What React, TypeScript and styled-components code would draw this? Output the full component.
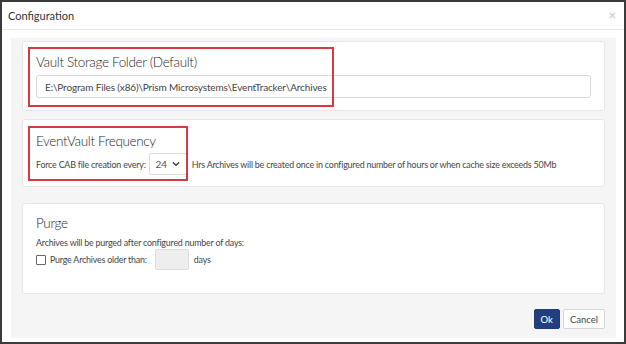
import React from "react";
import styled, { createGlobalStyle } from "styled-components";
import { FaChevronDown } from "react-icons/fa";

const GlobalStyle = createGlobalStyle`
  html, body {
    margin: 0;
    padding: 0;
    background: #ffffff;
  }
  body {
    font-family: Lato, "Open Sans", sans-serif;
    color: #333;
  }
`;

const Dialog = styled.div`
  box-sizing: border-box;
  width: 626px;
  height: 344px;
  border: 2px solid #3b3b3b;
  background: #fff;
  display: flex;
  flex-direction: column;
`;

const Header = styled.div`
  height: 27px;
  border-bottom: 1px solid #e8e8e8;
  display: flex;
  align-items: center;
  justify-content: space-between;
  padding: 0 8px 0 6px;
  font-size: 11px;
  color: #333;
`;

const Close = styled.span`
  color: #c4c4c4;
  font-size: 13px;
  line-height: 1;
  margin-top: -1px;
`;

const Body = styled.div`
  flex: 1;
  padding: 8px 8px 4px 9px;
  display: flex;
`;

const Well = styled.div`
  flex: 1;
  background: #f5f5f5;
  padding: 3px 11px 0 11px;
  display: flex;
  flex-direction: column;
`;

const Panel = styled.div<{ $pt: number; $pb: number; $mt?: number }>`
  position: relative;
  background: #fff;
  border: 1px solid #e6e6e6;
  border-radius: 3px;
  padding: ${(p) => p.$pt}px 13px ${(p) => p.$pb}px 13px;
  margin-top: ${(p) => p.$mt ?? 0}px;
`;

const Title = styled.div`
  font-size: 13.5px;
  font-weight: 300;
  line-height: 20px;
  color: #1f1f1f;
  letter-spacing: -0.35px;
`;

const TextBox = styled.div`
  margin-top: 3px;
  height: 23px;
  box-sizing: border-box;
  border: 1px solid #d8d8d8;
  border-radius: 3px;
  display: flex;
  align-items: center;
  padding-left: 8px;
  font-size: 10px;
  letter-spacing: -0.15px;
  color: #444;
  white-space: nowrap;
`;

const Row = styled.div`
  display: flex;
  align-items: center;
  gap: 3px;
  font-size: 8.9px;
  letter-spacing: -0.2px;
  color: #444;
  white-space: nowrap;

  & > * {
    flex-shrink: 0;
  }
`;

const SelectBox = styled.div`
  box-sizing: border-box;
  width: 38px;
  height: 22px;
  border: 1px solid #dcdcdc;
  border-radius: 2px;
  display: flex;
  align-items: center;
  justify-content: center;
  gap: 5px;
  font-size: 10px;
  color: #555;
  margin: 0 2px 0 0;
`;

const Text = styled.div`
  font-size: 8.9px;
  line-height: 13px;
  letter-spacing: -0.2px;
  color: #444;
  white-space: nowrap;
`;

const Check = styled.span`
  box-sizing: border-box;
  width: 10px;
  height: 10px;
  border: 1px solid #666;
  border-radius: 1px;
  margin-right: 1px;
`;

const SmallInput = styled.div`
  box-sizing: border-box;
  width: 34px;
  height: 21px;
  border: 1px solid #dcdcdc;
  border-radius: 2px;
  background: #eeeeee;
  margin: 0 2px 0 5px;
`;

const Mark = styled.div<{ $l: number; $t: number; $w: number; $h: number }>`
  position: absolute;
  left: ${(p) => p.$l}px;
  top: ${(p) => p.$t}px;
  width: ${(p) => p.$w}px;
  height: ${(p) => p.$h}px;
  box-sizing: border-box;
  border: 2px solid #d43a40;
  pointer-events: none;
`;

const Footer = styled.div`
  display: flex;
  justify-content: flex-end;
  gap: 3px;
  margin-top: 15px;
`;

const Button = styled.button<{ $primary?: boolean }>`
  height: 20px;
  padding: 0 6px;
  min-width: ${(p) => (p.$primary ? 25 : 38)}px;
  font-family: Lato, sans-serif;
  font-size: 9.5px;
  border-radius: 2px;
  border: 1px solid ${(p) => (p.$primary ? "#1d3c78" : "#d6d6d6")};
  background: ${(p) => (p.$primary ? "#213f7e" : "#fff")};
  color: ${(p) => (p.$primary ? "#fff" : "#444")};
`;

export default function App() {
  return (
    <>
      <GlobalStyle />
      <Dialog>
        <Header>
          <span>Configuration</span>
          <Close>×</Close>
        </Header>
        <Body>
          <Well>
            <Panel $pt={10} $pb={12}>
              <Title>Vault Storage Folder (Default)</Title>
              <TextBox>E:\Program Files (x86)\Prism Microsystems\EventTracker\Archives</TextBox>
              <Mark $l={5} $t={5} $w={306} $h={60} />
            </Panel>
            <Panel $pt={11} $pb={11} $mt={8}>
              <Title>EventVault Frequency</Title>
              <Row style={{ marginTop: 2 }}>
                <span>Force CAB file creation every:</span>
                <SelectBox>
                  24 <FaChevronDown size={8} color="#333" />
                </SelectBox>
                <span>Hrs Archives will be created once in configured number of hours or when cache size exceeds 50Mb</span>
              </Row>
              <Mark $l={5} $t={6} $w={160} $h={55} />
            </Panel>
            <Panel $pt={9} $pb={23} $mt={16}>
              <Title>Purge</Title>
              <Text style={{ marginTop: 3 }}>Archives will be purged after configured number of days:</Text>
              <Row>
                <Check />
                <span>Purge Archives older than:</span>
                <SmallInput />
                <span>days</span>
              </Row>
            </Panel>
            <Footer>
              <Button $primary>Ok</Button>
              <Button>Cancel</Button>
            </Footer>
          </Well>
        </Body>
      </Dialog>
    </>
  );
}
